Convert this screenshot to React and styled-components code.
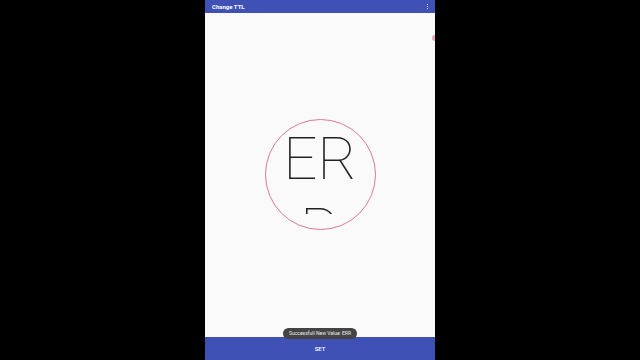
import React from 'react'
import styled, { createGlobalStyle } from 'styled-components'

const GlobalStyle = createGlobalStyle`
  html, body {
    margin: 0;
    padding: 0;
    background: #000;
    font-family: Roboto, 'Liberation Sans', sans-serif;
  }
`

const Stage = styled.div`
  display: flex;
  justify-content: center;
  width: 640px;
  height: 360px;
  background: #000;
`

const Screen = styled.div`
  position: relative;
  display: flex;
  flex-direction: column;
  width: 230px;
  height: 360px;
  background: #fafafa;
  overflow: hidden;
`

const AppBar = styled.div`
  display: flex;
  align-items: center;
  justify-content: space-between;
  height: 13px;
  padding: 0 7px 0 7px;
  background: #3f51b5;
  color: #fff;
  font-size: 6px;
  font-weight: 700;
`

const MenuDots = styled.div`
  display: flex;
  flex-direction: column;
  gap: 1px;
  span {
    width: 1.3px;
    height: 1.3px;
    background: #fff;
    border-radius: 50%;
  }
`

const Content = styled.div`
  flex: 1;
  display: flex;
  align-items: center;
  justify-content: center;
  padding-bottom: 2px;
`

const Ring = styled.div`
  display: flex;
  justify-content: center;
  width: 111px;
  height: 111px;
  border: 1px solid #d9789a;
  border-radius: 50%;
  box-sizing: border-box;
`

const ValueBox = styled.div`
  width: 90px;
  height: 91px;
  margin-top: 3px;
  overflow: hidden;
  font-family: Roboto, 'Open Sans', sans-serif;
  font-weight: 100;
  font-size: 60px;
  line-height: 71px;
  color: #222;
  text-align: center;
  word-break: break-all;
`

const EdgeGlow = styled.div`
  position: absolute;
  right: -3px;
  top: 35px;
  width: 6px;
  height: 6px;
  border-radius: 50%;
  background: #e6a7b8;
`

const Toast = styled.div`
  position: absolute;
  left: 50%;
  bottom: 21px;
  transform: translateX(-50%);
  padding: 2px 6px;
  border-radius: 6px;
  background: #444;
  color: #eee;
  font-size: 5px;
  white-space: nowrap;
  line-height: 7px;
`

const SetBar = styled.div`
  display: flex;
  align-items: center;
  justify-content: center;
  height: 23px;
  background: #3f51b5;
  color: #fff;
  font-size: 6px;
  font-weight: 500;
`

export default function App() {
  return (
    <>
      <GlobalStyle />
      <Stage>
        <Screen>
          <AppBar>
            <span>Change TTL</span>
            <MenuDots><span /><span /><span /></MenuDots>
          </AppBar>
          <Content>
            <Ring>
              <ValueBox>ERR</ValueBox>
            </Ring>
          </Content>
          <EdgeGlow />
          <Toast>Successfull New Value: ERR</Toast>
          <SetBar>SET</SetBar>
        </Screen>
      </Stage>
    </>
  )
}
